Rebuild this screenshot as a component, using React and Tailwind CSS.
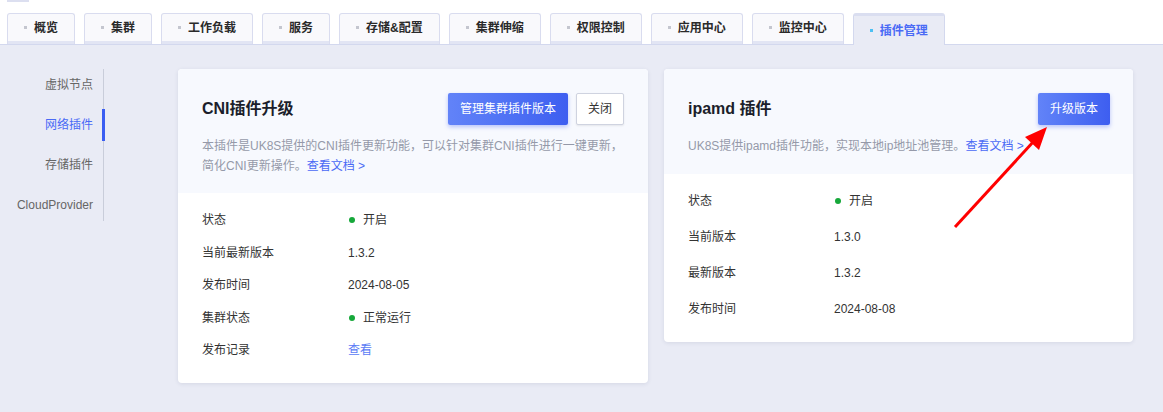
import React from 'react';

const tabs = ['概览', '集群', '工作负载', '服务', '存储&配置', '集群伸缩', '权限控制', '应用中心', '监控中心', '插件管理'];
const sideItems = ['虚拟节点', '网络插件', '存储插件', 'CloudProvider'];

const Dot = () => <span className="w-[6px] h-[6px] rounded-full bg-[#16a83a] ml-[1px]" />;

const Row = ({ label, children, h }) => (
  <div className={`flex items-center ${h}`}>
    <div className="w-[146px] shrink-0">{label}</div>
    <div className="flex items-center gap-[8px]">{children}</div>
  </div>
);

const App = () => {
  return (
    <div
      className="relative min-h-[412px] bg-[#e9ebf5] text-[12px] text-[#333]"
      style={{ fontFamily: '"Liberation Sans", "Noto Sans CJK SC", sans-serif' }}
    >
      {/* 顶部标签栏 */}
      <div className="bg-white border-b border-[#d3d8ee] h-[45px]">
        <div className="ml-[7px] w-[22px] h-[2px] bg-[#dcdff0]" />
        <div className="flex items-end gap-[9px] pl-[7px] mt-[11px]">
          {tabs.map((t, i) => {
            const active = i === tabs.length - 1;
            return active ? (
              <div key={t} className="h-[32px] -mb-[1px] flex items-center px-[16px] bg-[#e9ebf5] border border-b-0 border-[#d3d8ee] border-t-[3px] border-t-[#dadef0] rounded-t-[3px] font-semibold text-[#4a6af5]">
                <span className="w-[3px] h-[3px] bg-[#4cc0f3] mr-[7px]" />
                {t}
              </div>
            ) : (
              <div key={t} className="h-[31px] flex flex-col bg-[#f9f9fc] border border-b-0 border-[#d9dcef] rounded-t-[3px]">
                <div className="flex-1 flex items-center px-[16px] font-semibold text-[#2a2a2a]">
                  <span className="w-[3px] h-[3px] bg-[#c4c6cf] mr-[7px]" />
                  {t}
                </div>
                <div className="h-[3px] bg-[#e2e5f4]" />
              </div>
            );
          })}
        </div>
      </div>

      <div className="flex pt-[24px]">
        {/* 侧边栏 */}
        <div className="w-[104px] shrink-0">
          <div className="h-[152px] border-r border-[#c9cdda] flex flex-col justify-center">
            {sideItems.map((s, i) => (
              <div
                key={s}
                className={`relative h-[40px] shrink-0 flex items-center justify-end pr-[10px] ${i === 1 ? 'text-[#4a6af5]' : 'text-[#666]'}`}
              >
                {s}
                {i === 1 && <span className="absolute right-[-2px] top-[4px] w-[3px] h-[32px] bg-[#3b5ef2]" />}
              </div>
            ))}
          </div>
        </div>

        {/* 卡片区 */}
        <div className="flex items-start gap-[16px] ml-[74px]">
          <div className="w-[470px] bg-white rounded-[4px] shadow-[0_1px_4px_rgba(40,50,90,0.1)] overflow-hidden">
            <div className="bg-[#f7f9fe] px-[24px] pt-[24px] pb-[17px]">
              <div className="flex items-center justify-between">
                <h2 className="text-[16px] font-bold text-[#1b1e2b]">CNI插件升级</h2>
                <div className="flex gap-[8px]">
                  <button className="h-[32px] px-[12px] rounded-[2px] text-white bg-gradient-to-r from-[#6283f8] to-[#3e5ef0] shadow-[0_2px_4px_rgba(62,94,240,0.35)]">
                    管理集群插件版本
                  </button>
                  <button className="h-[32px] px-[11px] rounded-[2px] bg-white border border-[#cfd3e0] text-[#333] shadow-[0_1px_2px_rgba(0,0,0,0.08)]">
                    关闭
                  </button>
                </div>
              </div>
              <p className="mt-[11px] leading-[20px] text-[#9599a9] whitespace-nowrap">
                本插件是UK8S提供的CNI插件更新功能，可以针对集群CNI插件进行一键更新，
                <br />
                简化CNI更新操作。<span className="text-[#4a6af5]">查看文档 &gt;</span>
              </p>
            </div>
            <div className="px-[24px] pt-[11px] pb-[16px]">
              <Row label="状态" h="h-[32.5px]"><Dot />开启</Row>
              <Row label="当前最新版本" h="h-[32.5px]">1.3.2</Row>
              <Row label="发布时间" h="h-[32.5px]">2024-08-05</Row>
              <Row label="集群状态" h="h-[32.5px]"><Dot />正常运行</Row>
              <Row label="发布记录" h="h-[32.5px]"><span className="text-[#5b7bf5]">查看</span></Row>
            </div>
          </div>

          <div className="w-[469px] bg-white rounded-[4px] shadow-[0_1px_4px_rgba(40,50,90,0.1)] overflow-hidden">
            <div className="bg-[#f7f9fe] px-[24px] pt-[24px] pb-[18px]">
              <div className="flex items-center justify-between">
                <h2 className="text-[16px] font-bold text-[#1b1e2b]">ipamd 插件</h2>
                <button className="h-[32px] px-[12px] mr-[-1px] rounded-[2px] text-white bg-gradient-to-r from-[#6283f8] to-[#3e5ef0] shadow-[0_2px_4px_rgba(62,94,240,0.35)]">
                  升级版本
                </button>
              </div>
              <p className="mt-[11px] leading-[20px] text-[#9599a9] whitespace-nowrap">
                UK8S提供ipamd插件功能，实现本地ip地址池管理。<span className="text-[#4a6af5]">查看文档 &gt;</span>
              </p>
            </div>
            <div className="px-[24px] pt-[9px] pb-[15px]">
              <Row label="状态" h="h-[36px]"><Dot />开启</Row>
              <Row label="当前版本" h="h-[36px]">1.3.0</Row>
              <Row label="最新版本" h="h-[36px]">1.3.2</Row>
              <Row label="发布时间" h="h-[36px]">2024-08-08</Row>
            </div>
          </div>
        </div>
      </div>

      {/* 标注箭头 */}
      <svg className="absolute inset-0 pointer-events-none" width="1163" height="412">
        <line x1="955" y1="227" x2="1034" y2="141" stroke="#ff0000" strokeWidth="3" />
        <polygon points="1047,127 1025,137 1039,150" fill="#ff0000" />
      </svg>
    </div>
  );
};

export default App;
